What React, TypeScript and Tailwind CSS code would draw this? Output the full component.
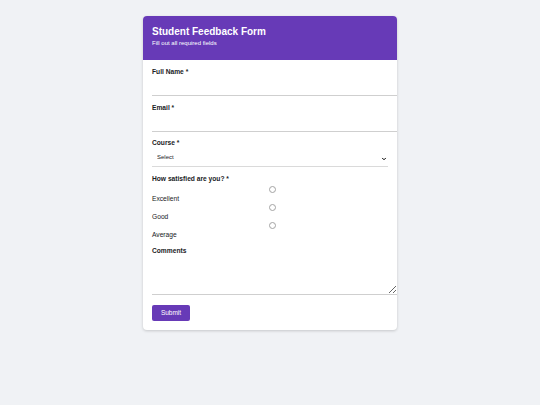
import { ChevronDown } from 'lucide-react';

const font = { fontFamily: '"Liberation Sans", Arial, sans-serif' };

function Field({ label, children }: { label: string; children: React.ReactNode }) {
  return (
    <div className="mb-[7.5px]">
      <label className="block text-[6.67px] leading-[8px] font-bold text-[#202124] mb-[1px]">{label}</label>
      {children}
    </div>
  );
}

export default function App() {
  const options = ['Excellent', 'Good', 'Average'];

  return (
    <div className="min-h-screen bg-[#f0f2f5] pt-[16px]" style={font}>
      <div className="w-[254px] mx-auto bg-white rounded-[4px] overflow-hidden shadow-[0_1px_3px_rgba(0,0,0,0.18)]">
        {/* Header */}
        <div className="bg-[#673ab7] px-[9px] pt-[10px] pb-[13px] text-white">
          <h1 className="text-[10px] leading-[12px] font-bold">Student Feedback Form</h1>
          <p className="text-[6px] leading-[7px] mt-[2px]">Fill out all required fields</p>
        </div>

        {/* Body */}
        <form className="px-[9px] pt-[8px] pb-[9px] text-[6.67px] leading-[8px]" onSubmit={(e) => e.preventDefault()}>
          <Field label="Full Name *">
            <input
              type="text"
              className="block w-[calc(100%+9px)] h-[19px] border-0 border-b border-[#cfcfcf] outline-none text-[6.67px]"
            />
          </Field>

          <Field label="Email *">
            <input
              type="email"
              className="block w-[calc(100%+9px)] h-[19px] border-0 border-b border-[#cfcfcf] outline-none text-[6.67px]"
            />
          </Field>

          <Field label="Course *">
            <div className="relative h-[19px] border-b border-[#dadada]">
              <select className="appearance-none w-full h-full bg-white pl-[5px] text-[6px] text-[#202124] outline-none">
                <option>Select</option>
              </select>
              <ChevronDown
                className="absolute right-[1px] top-[8px] w-[6px] h-[6px] text-black pointer-events-none"
                strokeWidth={4}
              />
            </div>
          </Field>

          {/* Satisfaction */}
          <div className="mb-[8px]">
            <div className="text-[6.67px] leading-[8px] font-bold text-[#202124] mb-[2px]">How satisfied are you? *</div>
            {options.map((o) => (
              <label key={o} className="block">
                <div className="h-[9px] flex items-center justify-center w-[calc(100%+5px)]">
                  <input
                    type="radio"
                    name="satisfaction"
                    className="appearance-none w-[7px] h-[7px] rounded-full border border-[#a3a3a3] bg-white m-0"
                  />
                </div>
                <span className="block text-[6.67px] leading-[9px] text-[#202124]">{o}</span>
              </label>
            ))}
          </div>

          <div className="mb-[10px]">
            <label className="block text-[6.67px] leading-[8px] font-bold text-[#202124] mb-[1px]">Comments</label>
            <textarea className="block w-[calc(100%+9px)] h-[39px] border-0 border-b border-[#cfcfcf] outline-none text-[6.67px]" />
          </div>

          <button
            type="submit"
            className="block w-[38px] h-[16px] bg-[#673ab7] rounded-[2px] text-white text-[6.5px] font-normal leading-[16px] text-center"
          >
            Submit
          </button>
        </form>
      </div>
    </div>
  );
}
